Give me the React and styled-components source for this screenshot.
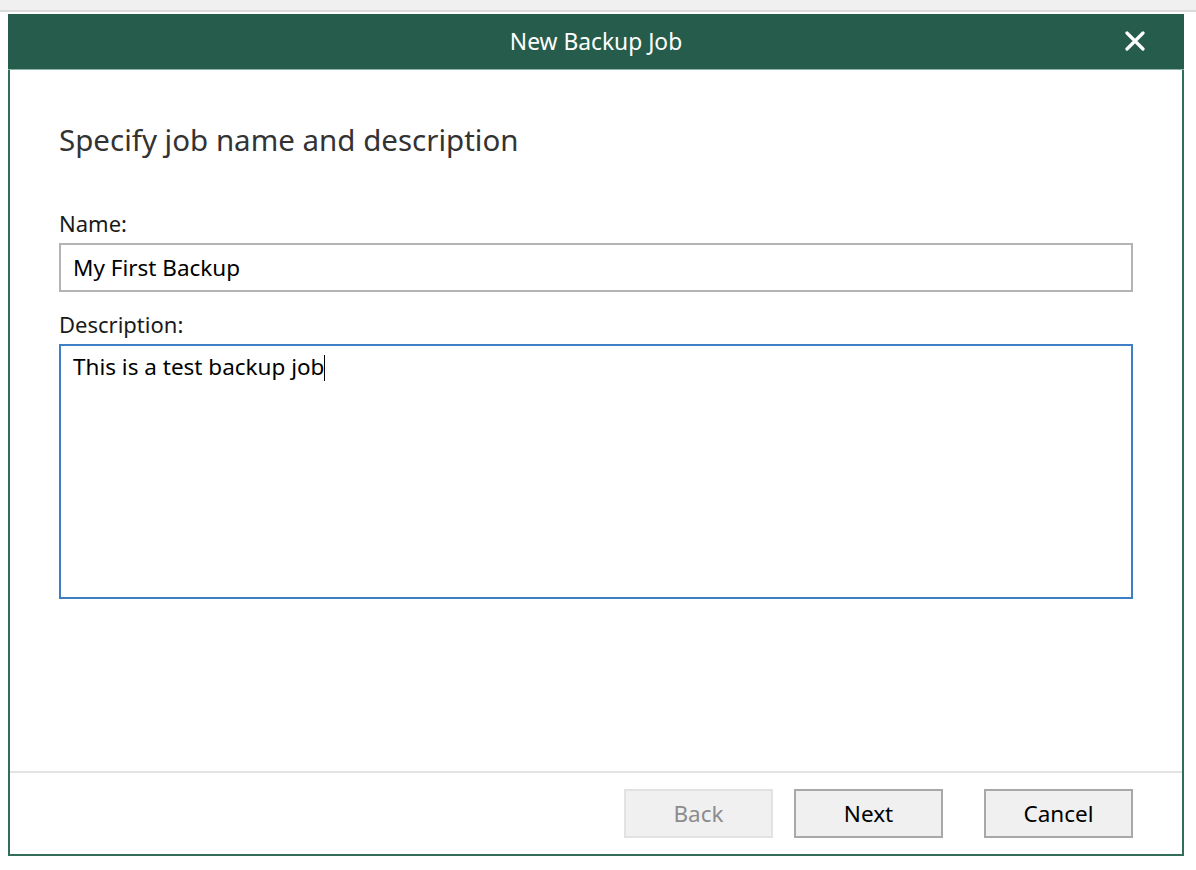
import React from 'react';
import styled, { createGlobalStyle } from 'styled-components';

const GlobalStyle = createGlobalStyle`
  html, body {
    margin: 0;
    padding: 0;
    background: #ffffff;
  }
  body {
    font-family: "Noto Sans", "Open Sans", Arial, sans-serif;
  }
`;

const Page = styled.div`
  width: 1196px;
  height: 870px;
  background: #ffffff;
  overflow: hidden;
`;

const TopStrip = styled.div`
  height: 10px;
  background: #f0f0f0;
  border-bottom: 2px solid #dadada;
  margin-bottom: 2px;
`;

const Dialog = styled.div`
  margin-left: 8px;
  width: 1176px;
  height: 842px;
  box-sizing: border-box;
  border: 2px solid #336e5b;
  border-top: none;
  display: flex;
  flex-direction: column;
`;

const Header = styled.div`
  height: 55px;
  margin: 0 -2px;
  background: #265c4b;
  border-bottom: 1px solid #8fb3a8;
  display: flex;
  align-items: center;
  justify-content: center;
  position: relative;
  color: #ffffff;
  font-size: 22.8px;
`;

const CloseButton = styled.button`
  position: absolute;
  right: 38px;
  top: 16px;
  width: 22px;
  height: 22px;
  padding: 0;
  border: none;
  background: transparent;
  display: flex;
  align-items: center;
  justify-content: center;
  cursor: pointer;
`;

const Body = styled.div`
  flex: 1;
  padding: 52px 49px 0 49px;
  display: flex;
  flex-direction: column;
`;

const Heading = styled.h1`
  margin: 0 0 53px 0;
  font-size: 29.5px;
  font-weight: 400;
  color: #333333;
  line-height: 36px;
`;

const Label = styled.div`
  font-size: 22px;
  color: #1a1a1a;
  line-height: 24px;
  margin-bottom: 8px;
`;

const TextBox = styled.div`
  box-sizing: border-box;
  height: ${(p) => p.$height}px;
  border: 2px solid ${(p) => (p.$focused ? '#3f7fc6' : '#b4b4b4')};
  padding: ${(p) => (p.$multi ? '6px 12px' : '0 12px')};
  display: flex;
  align-items: ${(p) => (p.$multi ? 'flex-start' : 'center')};
  font-size: 22.5px;
  color: #000000;
  line-height: 30px;
  margin-bottom: ${(p) => p.$gap}px;
`;

const Caret = styled.span`
  display: inline-block;
  width: 1px;
  height: 26px;
  margin-top: 3px;
  background: #000000;
`;

const Footer = styled.div`
  height: 83px;
  box-sizing: border-box;
  border-top: 2px solid #e3e3e3;
  display: flex;
  align-items: center;
  justify-content: flex-end;
  padding: 0 49px 0 0;
`;

const Button = styled.button`
  box-sizing: border-box;
  width: 149px;
  height: 49px;
  margin-left: ${(p) => p.$gap}px;
  background: #f0f0f0;
  border: 2px solid ${(p) => (p.disabled ? '#e2e2e2' : '#a8a8a8')};
  color: ${(p) => (p.disabled ? '#8c8c8c' : '#000000')};
  font-family: "Noto Sans", "Open Sans", Arial, sans-serif;
  font-size: 22.5px;
  padding: 0;
  cursor: ${(p) => (p.disabled ? 'default' : 'pointer')};
`;

function CloseIcon() {
  return (
    <svg width="20" height="20" viewBox="0 0 20 20">
      <path d="M2 2 L18 18 M18 2 L2 18" stroke="#ffffff" strokeWidth="3.2" strokeLinecap="round" />
    </svg>
  );
}

export default function App() {
  return (
    <>
      <GlobalStyle />
      <Page>
        <TopStrip />
        <Dialog>
          <Header>
            New Backup Job
            <CloseButton aria-label="Close">
              <CloseIcon />
            </CloseButton>
          </Header>
          <Body>
            <Heading>Specify job name and description</Heading>
            <Label>Name:</Label>
            <TextBox $height={49} $gap={20}>My First Backup</TextBox>
            <Label>Description:</Label>
            <TextBox $height={255} $gap={0} $multi $focused>
              This is a test backup job
              <Caret />
            </TextBox>
          </Body>
          <Footer>
            <Button disabled $gap={0}>Back</Button>
            <Button $gap={21}>Next</Button>
            <Button $gap={41}>Cancel</Button>
          </Footer>
        </Dialog>
      </Page>
    </>
  );
}
